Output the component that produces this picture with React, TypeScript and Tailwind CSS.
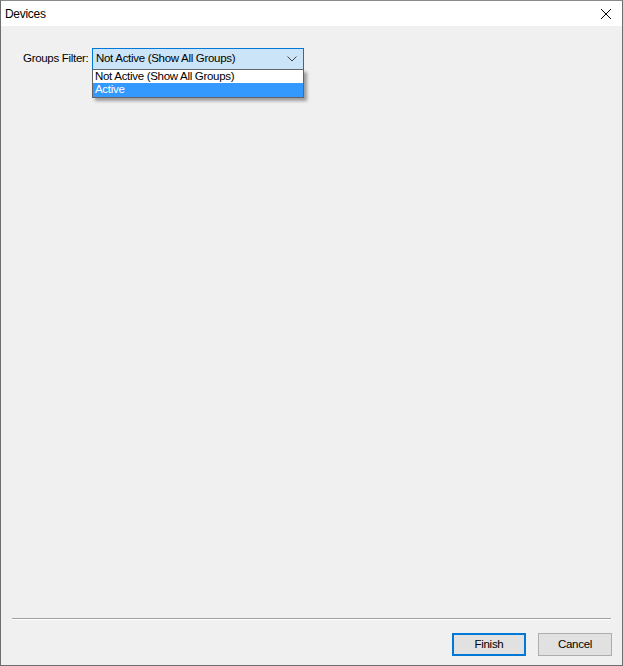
import React from "react";

export default function App() {
  return (
    <div className="w-[623px] h-[666px] flex flex-col border border-[#6e6e6e] border-t-[#8a8a8a] bg-[#f0f0f0] font-['Liberation_Sans',Arial,sans-serif] text-[11.5px] tracking-[-0.3px] text-black overflow-hidden">
      <div className="h-[25px] bg-white flex items-center justify-between pl-[4px] pr-[10px] shrink-0">
        <span className="text-[12px] leading-none">Devices</span>
        <svg width="12" height="12" viewBox="0 0 12 12" className="mt-[1px]">
          <path d="M1 1 L11 11 M11 1 L1 11" stroke="#000" strokeWidth="1" />
        </svg>
      </div>
      <div className="flex-1 flex flex-col">
        <div className="flex items-center pt-[22px] pl-[22px]">
          <span className="w-[69px] whitespace-nowrap text-[#000]">Groups Filter:</span>
          <div className="relative">
            <div className="w-[212px] h-[22px] border border-[#0078d7] bg-[#cce4f7] flex items-center justify-between pl-[3px] pr-[6px]">
              <span className="whitespace-nowrap">Not Active (Show All Groups)</span>
              <svg width="10" height="6" viewBox="0 0 10 6">
                <path d="M0.5 0.5 L5 5 L9.5 0.5" fill="none" stroke="#444" strokeWidth="1" />
              </svg>
            </div>
            <div className="absolute left-0 top-[21px] w-[212px] border border-[#646464] bg-white flex flex-col shadow-[3px_3px_3px_rgba(0,0,0,0.35)] z-10">
              <div className="h-[13px] flex items-center pl-[2px] leading-none whitespace-nowrap">Not Active (Show All Groups)</div>
              <div className="h-[14px] flex items-center pl-[2px] leading-none bg-[#3399ff] text-white">Active</div>
            </div>
          </div>
        </div>
        <div className="flex-1" />
        <div className="mx-[11px] h-[2px] border-t border-[#a0a0a0] border-b border-b-white" />
        <div className="flex justify-end gap-[12px] pr-[10px] pt-[13px] pb-[9px]">
          <button className="w-[74px] h-[23px] border-2 border-[#0078d7] bg-[#e1e1e1] flex items-center justify-center">
            Finish
          </button>
          <button className="w-[74px] h-[23px] border border-[#adadad] bg-[#e1e1e1] flex items-center justify-center">
            Cancel
          </button>
        </div>
      </div>
    </div>
  );
}
